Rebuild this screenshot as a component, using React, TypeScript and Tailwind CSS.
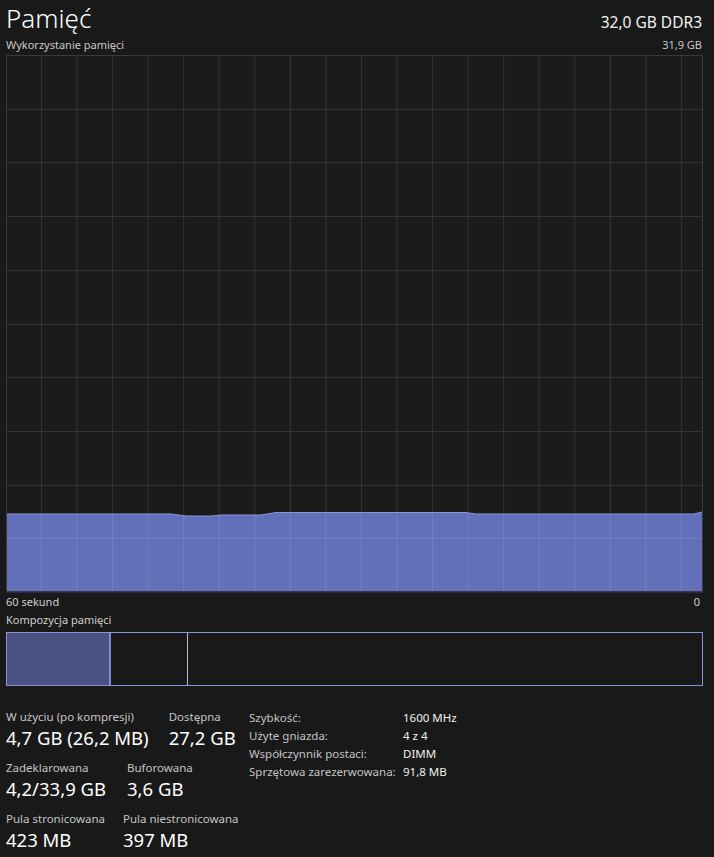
import React from "react";

const font = { fontFamily: '"Noto Sans", "Open Sans", sans-serif' };

const GRAPH_W = 697;
const GRAPH_H = 537;

const usageLine: [number, number][] = [
  [0, 459],
  [165, 459],
  [180, 461],
  [205, 461],
  [215, 460],
  [255, 460],
  [270, 457.5],
  [460, 457.5],
  [470, 459],
  [688, 459],
  [696, 457],
];

const MemoryGraph: React.FC = () => {
  const cols = Array.from({length: 19}, (_, i) => 35 + i * 35.55);
  const rows = Array.from({length: 9}, (_, i) => (i + 1) * (GRAPH_H / 10));
  const top = usageLine.map(([x, y]) => `${x},${y}`).join(" L");
  const area = `M0,${GRAPH_H} L${top} L${GRAPH_W - 1},${GRAPH_H} Z`;

  return (
    <svg width={GRAPH_W} height={GRAPH_H + 1} className="block">
      <rect x="0" y="0" width={GRAPH_W} height={GRAPH_H + 1} fill="#1b1b1b" />
      <path d={area} fill="#6270b9" />
      {cols.map((x) => (
        <line key={x} x1={x + 0.5} x2={x + 0.5} y1="0" y2={GRAPH_H} stroke="#ffffff" strokeOpacity="0.1" />
      ))}
      {rows.map((y) => (
        <line
          key={y}
          x1="0"
          x2={GRAPH_W}
          y1={Math.round(y) + 0.5}
          y2={Math.round(y) + 0.5}
          stroke="#ffffff"
          strokeOpacity="0.1"
        />
      ))}
      <path d={`M${top}`} fill="none" stroke="#8a96dc" strokeWidth="1" />
      <rect x="0.5" y="0.5" width={GRAPH_W - 1} height={GRAPH_H - 1} fill="none" stroke="#3a3a3a" />
      <line x1="0" x2={GRAPH_W} y1={GRAPH_H + 0.5} y2={GRAPH_H + 0.5} stroke="#262b48" />
    </svg>
  );
};

const Stat: React.FC<{label: string; value: string; className?: string}> = ({label, value, className}) => (
  <div className={`flex flex-col ${className ?? ""}`}>
    <span className="text-[11.5px] leading-[16px] text-[#c4c4c4]">{label}</span>
    <span className="text-[18.5px] leading-[26px] text-white">{value}</span>
  </div>
);

const details = [
  ["Szybkość:", "1600 MHz"],
  ["Użyte gniazda:", "4 z 4"],
  ["Współczynnik postaci:", "DIMM"],
  ["Sprzętowa zarezerwowana:", "91,8 MB"],
];

export default function App() {
  return (
    <div className="h-[857px] w-[714px] overflow-hidden bg-[#191919] px-[6px]" style={font}>
      <div className="flex h-[37px] items-baseline justify-between pr-[6px]">
        <h1 className="text-[26px] font-light leading-[36px] text-white">Pamięć</h1>
        <span className="text-[15.5px] leading-[32px] text-[#f0f0f0]">32,0 GB DDR3</span>
      </div>
      <div className="flex h-[18px] items-start justify-between pr-[6px] text-[11px] leading-[16px] text-[#c8c8c8]">
        <span>Wykorzystanie pamięci</span>
        <span>31,9 GB</span>
      </div>
      <MemoryGraph />
      <div className="flex h-[18px] items-start justify-between pr-[8px] pt-[1px] text-[11px] leading-[16px] text-[#d0d0d0]">
        <span>60 sekund</span>
        <span>0</span>
      </div>
      <div className="h-[21px] pt-[1px] text-[11px] leading-[16px] text-[#d0d0d0]">Kompozycja pamięci</div>
      <div className="flex h-[54px] w-[697px] border border-[#8a94d4]">
        <div className="w-[104px] border-r-2 border-[#7c88d8] bg-[#4a5284]" />
        <div className="w-[77px] border-r border-[#b9bccc]" />
        <div className="flex-1" />
      </div>
      <div className="flex items-start pt-[23px]">
        <div className="flex w-[243px] flex-col gap-[9px]">
          <div className="flex gap-[20px]">
            <Stat label="W użyciu (po kompresji)" value="4,7 GB (26,2 MB)" />
            <Stat label="Dostępna" value="27,2 GB" />
          </div>
          <div className="flex gap-[8px]">
            <Stat label="Zadeklarowana" value="4,2/33,9 GB" className="w-[113px]" />
            <Stat label="Buforowana" value="3,6 GB" />
          </div>
          <div className="flex gap-[8px]">
            <Stat label="Pula stronicowana" value="423 MB" className="w-[109px]" />
            <Stat label="Pula niestronicowana" value="397 MB" />
          </div>
        </div>
        <div className="grid grid-cols-[154px_1fr] content-start gap-y-[2px] pt-[1px] text-[11.5px] leading-[16px]">
          {details.map(([k, v]) => (
            <React.Fragment key={k}>
              <span className="text-[#c4c4c4]">{k}</span>
              <span className="text-[#f0f0f0]">{v}</span>
            </React.Fragment>
          ))}
        </div>
      </div>
    </div>
  );
}
